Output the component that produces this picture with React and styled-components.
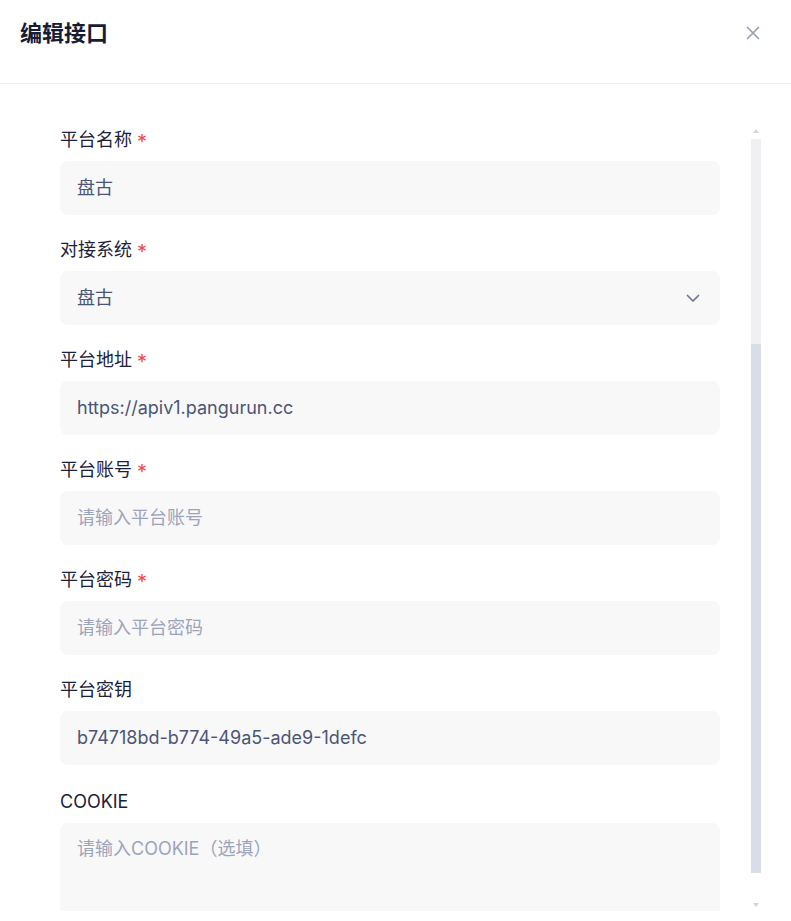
import React from 'react';
import styled, { createGlobalStyle } from 'styled-components';

const GlobalStyle = createGlobalStyle`
  html, body {
    margin: 0;
    padding: 0;
    background: #ffffff;
  }
  body {
    font-family: Inter, "Noto Sans CJK SC", sans-serif;
    -webkit-font-smoothing: antialiased;
  }
  * { box-sizing: border-box; }
`

const Modal = styled.div`
  width: 791px;
  height: 921px;
  background: #fff;
  display: flex;
  flex-direction: column;
  overflow: hidden;
`
const Header = styled.div`
  height: 84px;
  flex: none;
  display: flex;
  align-items: flex-start;
  justify-content: space-between;
  padding: 22px 30px 0 20px;
  border-bottom: 1px solid #eceef2;
`
const Title = styled.h2`
  margin: 0;
  font-size: 22px;
  font-weight: 700;
  color: #161c36;
  line-height: 22px;
`
const CloseBtn = styled.button`
  border: 0;
  background: none;
  padding: 0;
  margin-top: 3px;
  width: 16px;
  height: 16px;
  display: flex;
  align-items: center;
  justify-content: center;
  cursor: pointer;
`
const Body = styled.div`
  flex: 1;
  display: flex;
  min-height: 0;
  padding-bottom: 10px;
`
const Form = styled.div`
  width: 720px;
  padding: 44px 0 0 60px;
  display: flex;
  flex-direction: column;
  overflow: hidden;
`
const Field = styled.div`
  display: flex;
  flex-direction: column;
  gap: 9px;
  margin-bottom: ${p => p.$gapAfter}px;
  flex: none;
`
const Label = styled.label`
  font-size: 18px;
  line-height: 24px;
  color: #1b2139;
  display: flex;
  align-items: center;
  gap: 5px;
`
const Star = styled.span`
  color: #f04a4a;
  font-size: 20px;
  line-height: 20px;
  margin-top: 4px;
`
const InputBox = styled.div`
  height: ${p => p.$tall ? '120px' : '54px'};
  background: #f8f8f9;
  border-radius: 8px;
  padding: ${p => p.$tall ? '13px 20px 13px 17px' : '0 20px 0 17px'};
  display: flex;
  align-items: ${p => p.$tall ? 'flex-start' : 'center'};
  justify-content: space-between;
  font-size: 18px;
  line-height: 26px;
  color: ${p => p.$placeholder ? '#9ca4bc' : '#4b5576'};
`
const Rail = styled.div`
  width: 10px;
  margin-left: 31px;
  padding-top: 45px;
  display: flex;
  flex-direction: column;
  align-items: center;
`
const Arrow = styled.div`
  width: 0;
  height: 0;
  border-left: 3.5px solid transparent;
  border-right: 3.5px solid transparent;
  ${p => p.$down
    ? 'border-top: 4px solid #d4d6dc; margin-top: auto; margin-bottom: 4px;'
    : 'border-bottom: 4px solid #d4d6dc; margin-bottom: 6px;'}
`
const Track = styled.div`
  width: 10px;
  height: ${p => p.$h}px;
  background: ${p => p.$thumb ? '#d9dde8' : '#f0f0f2'};
  flex: none;
`

const Chevron = () => (
  <svg width="14" height="9" viewBox="0 0 14 9" fill="none">
    <polyline points="1.5,1.5 7,7 12.5,1.5" stroke="#6b7491" strokeWidth="1.7" strokeLinecap="round" strokeLinejoin="round" />
  </svg>
)

const CloseIcon = () => (
  <svg width="14" height="14" viewBox="0 0 14 14" fill="none">
    <path d="M1.5 1.5 L12.5 12.5 M12.5 1.5 L1.5 12.5" stroke="#98a0b6" strokeWidth="1.7" strokeLinecap="round" />
  </svg>
)

const fields = [
  { label: '平台名称', required: true, value: '盘古' },
  { label: '对接系统', required: true, value: '盘古', select: true },
  { label: '平台地址', required: true, value: 'https://apiv1.pangurun.cc' },
  { label: '平台账号', required: true, placeholder: '请输入平台账号' },
  { label: '平台密码', required: true, placeholder: '请输入平台密码' },
  { label: '平台密钥', value: 'b74718bd-b774-49a5-ade9-1defc' },
  { label: 'COOKIE', placeholder: '请输入COOKIE（选填）', tall: true },
];

export default function App() {
  return (
    <>
      <GlobalStyle />
      <Modal>
        <Header>
          <Title>编辑接口</Title>
          <CloseBtn aria-label="close"><CloseIcon /></CloseBtn>
        </Header>
        <Body>
          <Form>
            {fields.map((f, i) => (
              <Field key={f.label} $gapAfter={i === 5 ? 25 : 23}>
                <Label>
                  {f.label}
                  {f.required && <Star>*</Star>}
                </Label>
                <InputBox $tall={f.tall} $placeholder={!f.value}>
                  <span>{f.value || f.placeholder}</span>
                  {f.select && <Chevron />}
                </InputBox>
              </Field>
            ))}
          </Form>
          <Rail>
            <Arrow />
            <Track $h={205} />
            <Track $thumb $h={529} />
            <Arrow $down />
          </Rail>
        </Body>
      </Modal>
    </>
  );
}
